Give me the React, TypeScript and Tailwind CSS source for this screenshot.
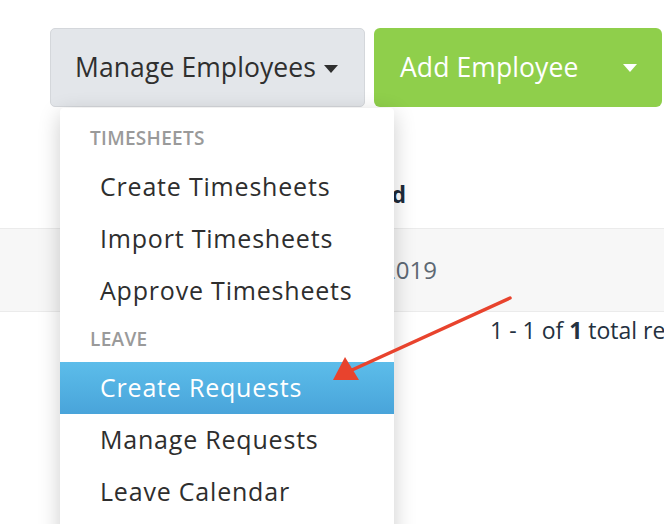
// Employees toolbar with the "Manage Employees" menu open
// Table behind the menu is only partly visible

const font = { fontFamily: '"Open Sans", Lato, sans-serif' };

type MenuEntry = { kind: 'header' | 'item'; label: string; active?: boolean };

const menu: MenuEntry[] = [
  { kind: 'header', label: 'Timesheets' },
  { kind: 'item', label: 'Create Timesheets' },
  { kind: 'item', label: 'Import Timesheets' },
  { kind: 'item', label: 'Approve Timesheets' },
  { kind: 'header', label: 'Leave' },
  { kind: 'item', label: 'Create Requests', active: true },
  { kind: 'item', label: 'Manage Requests' },
  { kind: 'item', label: 'Leave Calendar' },
];

function Caret({ className }: { className?: string }) {
  return (
    <svg width="14" height="8" viewBox="0 0 14 8" className={className}>
      <path d="M0 0 L14 0 L7 8 Z" fill="currentColor" />
    </svg>
  );
}

function Dropdown() {
  return (
    <div className="absolute left-[60px] top-[108px] w-[334px] rounded-t-[4px] bg-white pb-[40px] pt-[8px] shadow-[0_6px_22px_rgba(0,0,0,0.2)]">
      {menu.map((m) =>
        m.kind === 'header' ? (
          <div
            key={m.label}
            className="flex h-[45px] items-center pl-[30px] text-[19px] font-semibold uppercase tracking-[0.3px] text-[#9a9a9a]"
          >
            {m.label}
          </div>
        ) : (
          <div
            key={m.label}
            className={
              m.active
                ? 'flex h-[52px] items-center bg-gradient-to-b from-[#5cbdea] to-[#49a4da] pl-[40px] text-[25px] tracking-[0.8px] text-white'
                : 'flex h-[52px] items-center pl-[40px] text-[25px] tracking-[0.8px] text-[#2e2e2e]'
            }
          >
            {m.label}
          </div>
        )
      )}
    </div>
  );
}

// Red annotation arrow pointing at "Create Requests"
function Arrow() {
  return (
    <svg className="pointer-events-none absolute left-0 top-0" width="664" height="524">
      <line x1="510" y1="298" x2="352" y2="370" stroke="#e8432d" strokeWidth="3.5" strokeLinecap="round" />
      <polygon points="333,380 345,357 359,380" fill="#e8432d" />
    </svg>
  );
}

export default function App() {
  return (
    <div className="relative h-[524px] w-[664px] overflow-hidden bg-white" style={font}>
      {/* Toolbar */}
      <div className="flex justify-end gap-[9px] pr-[2px] pt-[28px]">
        <button className="flex h-[79px] w-[315px] items-center gap-[8px] rounded-[5px] border border-[#d4d7db] bg-[#e3e6ea] pl-[24px] text-[26.5px] text-[#2f2f2f]">
          <span className="tracking-[0.1px]">Manage Employees</span>
          <Caret className="mt-[2px]" />
        </button>
        <button className="flex h-[79px] w-[288px] items-center justify-between rounded-[6px] bg-[#8fcf4b] pl-[26px] pr-[25px] text-[26.5px] font-medium text-white">
          <span className="tracking-[0.1px]">Add Employee</span>
          <Caret className="mt-[1px]" />
        </button>
      </div>

      {/* Table behind the menu */}
      <div className="mt-[53px]">
        <div className="flex h-[68px] items-center">
          <div className="w-[406px] text-right text-[23px] font-bold text-[#1e2b3a]">Date Requested</div>
        </div>
        <div className="flex h-[84px] items-center border-y border-[#ebebeb] bg-[#f7f7f7]">
          <div className="w-[437px] text-right text-[24px] text-[#5d6873]">Jan 14, 2019</div>
        </div>
        <div className="flex h-[36px] items-center pl-[490px] text-[23px] whitespace-nowrap text-[#243140]">
          <span>
            1 - 1 of <b>1</b> total records
          </span>
        </div>
      </div>

      <Dropdown />
      <Arrow />
    </div>
  );
}
